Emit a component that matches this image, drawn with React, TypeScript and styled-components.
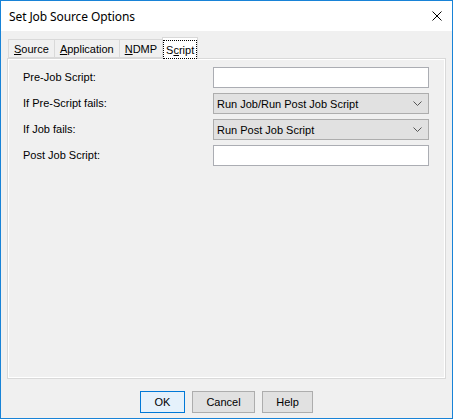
import styled, { createGlobalStyle } from "styled-components";

const GlobalStyle = createGlobalStyle`
  html, body {
    margin: 0;
    padding: 0;
    background: #ffffff;
  }
  * {
    box-sizing: border-box;
  }
`;

const tabs = [
  { key: "source", before: "", mnemonic: "S", after: "ource" },
  { key: "application", before: "", mnemonic: "A", after: "pplication" },
  { key: "ndmp", before: "", mnemonic: "N", after: "DMP" },
  { key: "script", before: "S", mnemonic: "c", after: "ript" },
];

const App = () => {
  const activeTab = "script";

  return (
    <>
      <GlobalStyle />
      <Window>
        <TitleBar>
          <Title>Set Job Source Options</Title>
          <CloseButton aria-label="Close">
            <svg width="10" height="10" viewBox="0 0 10 10">
              <path d="M0.5 0.5 L9.5 9.5 M9.5 0.5 L0.5 9.5" stroke="#000" strokeWidth="1" fill="none" />
            </svg>
          </CloseButton>
        </TitleBar>

        <Body>
          <TabStrip>
            {tabs.map((tab) => (
              <Tab key={tab.key} $active={tab.key === activeTab}>
                <TabLabel $active={tab.key === activeTab}>
                  {tab.before}
                  <u>{tab.mnemonic}</u>
                  {tab.after}
                </TabLabel>
              </Tab>
            ))}
          </TabStrip>

          <Panel>
            <FormGrid>
              <Label>Pre-Job Script:</Label>
              <TextBox />

              <Label>If Pre-Script fails:</Label>
              <Select>
                <span>Run Job/Run Post Job Script</span>
                <Chevron />
              </Select>

              <Label>If Job fails:</Label>
              <Select>
                <span>Run Post Job Script</span>
                <Chevron />
              </Select>

              <Label>Post Job Script:</Label>
              <TextBox />
            </FormGrid>
          </Panel>

          <ButtonRow>
            <DialogButton $primary $width={45}>OK</DialogButton>
            <DialogButton $width={63}>Cancel</DialogButton>
            <DialogButton $width={51}>Help</DialogButton>
          </ButtonRow>
        </Body>
      </Window>
    </>
  );
};

const Chevron = () => (
  <svg width="9" height="5" viewBox="0 0 9 5">
    <path d="M0.5 0.5 L4.5 4.5 L8.5 0.5" stroke="#555" strokeWidth="1" fill="none" />
  </svg>
);

export default App;

const Window = styled.div`
  width: 453px;
  height: 419px;
  border: 1px solid #1883d7;
  display: flex;
  flex-direction: column;
  background: #f0f0f0;
`;

const TitleBar = styled.div`
  height: 30px;
  background: #ffffff;
  display: flex;
  align-items: center;
  justify-content: space-between;
  padding-left: 8px;
`;

const Title = styled.span`
  font-family: "Noto Sans", "Liberation Sans", sans-serif;
  font-size: 12px;
  color: #000;
  letter-spacing: -0.1px;
`;

const CloseButton = styled.div`
  width: 30px;
  height: 30px;
  display: flex;
  align-items: center;
  justify-content: center;
`;

const Body = styled.div`
  flex: 1;
  display: flex;
  flex-direction: column;
  padding: 6px 6px 0 6px;
`;

const TabStrip = styled.div`
  display: flex;
  align-items: flex-end;
  height: 21px;
  padding-left: 2px;
  position: relative;
  z-index: 1;
`;

const Tab = styled.div<{ $active?: boolean }>`
  height: ${(p) => (p.$active ? "22px" : "19px")};
  margin-bottom: ${(p) => (p.$active ? "-1px" : "0")};
  margin-left: -1px;
  padding: ${(p) => (p.$active ? "2px 1px 0" : "1px 5px 0")};
  border: 1px solid #d9d9d9;
  border-bottom: ${(p) => (p.$active ? "none" : "1px solid #d9d9d9")};
  background: ${(p) => (p.$active ? "#ffffff" : "#f0f0f0")};
  display: flex;
  align-items: center;
  font-family: "Liberation Sans", Arial, sans-serif;
  font-size: 11px;
  color: #000;
`;

const TabLabel = styled.span<{ $active?: boolean }>`
  display: flex;
  align-items: center;
  height: ${(p) => (p.$active ? "17px" : "auto")};
  padding: ${(p) => (p.$active ? "0 2px" : "0")};
  outline: ${(p) => (p.$active ? "1px dotted #000" : "none")};
  outline-offset: 0;
  white-space: pre;
`;

const Panel = styled.div`
  flex: 1;
  border: 1px solid #d9d9d9;
  box-shadow: inset 0 0 0 1px #ffffff;
  background: #f0f0f0;
  padding: 8px 15px 0 15px;
`;

const FormGrid = styled.div`
  display: grid;
  grid-template-columns: 190px 216px;
  grid-auto-rows: 21px;
  row-gap: 5px;
  align-items: center;
`;

const Label = styled.div`
  font-family: "Liberation Sans", Arial, sans-serif;
  font-size: 11px;
  color: #000;
  margin-top: -1px;
`;

const TextBox = styled.div`
  height: 21px;
  background: #ffffff;
  border: 1px solid #abadb3;
`;

const Select = styled.div`
  height: 21px;
  background: #e1e1e1;
  border: 1px solid #adadad;
  display: flex;
  align-items: center;
  justify-content: space-between;
  padding: 0 6px 0 3px;
  font-family: "Liberation Sans", Arial, sans-serif;
  font-size: 11px;
  color: #000;
`;

const ButtonRow = styled.div`
  display: flex;
  justify-content: center;
  gap: 7px;
  padding: 12px 0 5px;
`;

const DialogButton = styled.div<{ $primary?: boolean; $width: number }>`
  width: ${(p) => p.$width}px;
  height: 22px;
  border: 1px solid ${(p) => (p.$primary ? "#0078d7" : "#adadad")};
  background: ${(p) => (p.$primary ? "#e5f1fb" : "#e1e1e1")};
  display: flex;
  align-items: center;
  justify-content: center;
  font-family: "Liberation Sans", Arial, sans-serif;
  font-size: 11px;
  color: #000;
`;
